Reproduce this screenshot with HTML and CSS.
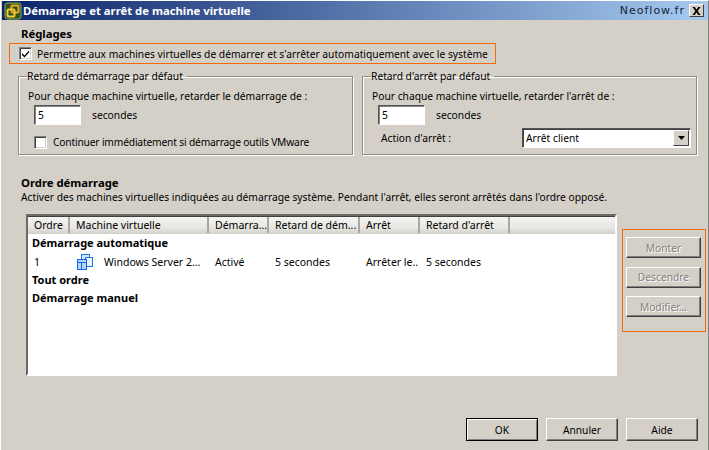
FILE: index.html
```html
<!DOCTYPE html>
<html lang="fr">
<head>
<meta charset="utf-8">
<title>Démarrage et arrêt de machine virtuelle</title>
<link rel="stylesheet" href="styles.css">
</head>
<body>
<div class="window">
  <header class="titlebar">
    <svg class="app-icon" width="18" height="18" viewBox="0 0 18 18">
      <rect x="1" y="1" width="16" height="16" rx="2.5" fill="#33531c" stroke="#8fb04a"/>
      <rect x="7.500" y="3.500" width="7" height="7" rx="1" fill="none" stroke="#e8a92c" stroke-width="2"/>
      <rect x="3.500" y="7.500" width="7" height="7" rx="1" fill="none" stroke="#f6c83c" stroke-width="2"/>
    </svg>
    <span class="title">Démarrage et arrêt de machine virtuelle</span>
    <span class="brand">Neoflow.fr</span>
    <button class="close" type="button">
      <svg width="9" height="8" viewBox="0 0 9 8"><path d="M0.500 0h2.200l1.800 2.600L6.300 0h2.200L5.700 4l2.800 4H6.300L4.500 5.400 2.700 8H0.500l2.800-4z" fill="#000"/></svg>
    </button>
  </header>

  <main class="content">
    <h2 class="heading settings-heading">Réglages</h2>
    <label class="highlight auto-start">
      <span class="check checked">
        <svg width="9" height="9" viewBox="0 0 9 9"><path d="M1 4l2.500 2.500L8 1.500v2L3.500 8.500 1 6z" fill="#000"/></svg>
      </span>
      Permettre aux machines virtuelles de démarrer et s'arrêter automatiquement avec le système
    </label>

    <div class="groups">
      <fieldset class="group">
        <legend>Retard de démarrage par défaut</legend>
        <p class="group-text">Pour chaque machine virtuelle, retarder le démarrage de :</p>
        <div class="delay"><span class="input">5</span><span>secondes</span></div>
        <label class="continue"><span class="check"></span>Continuer immédiatement si démarrage outils VMware</label>
      </fieldset>
      <fieldset class="group">
        <legend>Retard d'arrêt par défaut</legend>
        <p class="group-text">Pour chaque machine virtuelle, retarder l'arrêt de :</p>
        <div class="delay"><span class="input">5</span><span>secondes</span></div>
        <div class="action">
          <span class="action-label">Action d'arrêt :</span>
          <div class="select">
            <span class="select-value">Arrêt client</span>
            <span class="select-arrow"><svg width="7" height="4" viewBox="0 0 7 4"><path d="M0 0h7L3.500 4z" fill="#000"/></svg></span>
          </div>
        </div>
      </fieldset>
    </div>

    <h2 class="heading order-heading">Ordre démarrage</h2>
    <p class="order-text">Activer des machines virtuelles indiquées au démarrage système. Pendant l'arrêt, elles seront arrêtés dans l'ordre opposé.</p>

    <div class="order-area">
      <div class="table">
        <div class="thead">
          <span class="th">Ordre</span>
          <span class="th">Machine virtuelle</span>
          <span class="th">Démarra...</span>
          <span class="th">Retard de dém...</span>
          <span class="th">Arrêt</span>
          <span class="th">Retard d'arrêt</span>
          <span class="th th-last"></span>
        </div>
        <div class="tbody">
          <div class="group-row">Démarrage automatique</div>
          <div class="row">
            <span class="cell cell-order">1</span>
            <span class="cell cell-vm">
              <svg class="vm-icon" width="16" height="16" viewBox="0 0 16 16">
                <rect x="4.500" y="0.500" width="8" height="8" fill="#d6e8fc" stroke="#1a78ee"/>
                <rect x="8.500" y="3.500" width="7" height="9" fill="#eaf3fd" stroke="#1a78ee"/>
                <rect x="0.500" y="5.500" width="9" height="10" fill="#b4d8fb" stroke="#0f66e0"/>
                <path d="M1 8.500h8M4.500 9v6" stroke="#0f66e0"/>
              </svg>
              <span class="vm-name">Windows Server 2...</span>
            </span>
            <span class="cell">Activé</span>
            <span class="cell">5 secondes</span>
            <span class="cell">Arrêter le..</span>
            <span class="cell">5 secondes</span>
          </div>
          <div class="group-row">Tout ordre</div>
          <div class="group-row">Démarrage manuel</div>
        </div>
      </div>
      <div class="highlight side">
        <button class="btn side-btn" type="button" disabled>Monter</button>
        <button class="btn side-btn" type="button" disabled>Descendre</button>
        <button class="btn side-btn" type="button" disabled>Modifier...</button>
      </div>
    </div>

    <footer class="footer">
      <button class="btn foot-btn default" type="button">OK</button>
      <button class="btn foot-btn" type="button">Annuler</button>
      <button class="btn foot-btn" type="button">Aide</button>
    </footer>
  </main>
</div>
</body>
</html>
```
FILE: styles.css
```css
* { box-sizing: border-box; }
html, body { margin: 0; padding: 0; }
body {
  width: 709px;
  height: 450px;
  overflow: hidden;
  background: #d4d0c8;
  font-family: "Noto Sans", "Liberation Sans", sans-serif;
  font-size: 10.25px;
  line-height: 14px;
  color: #000;
}
.window {
  width: 709px;
  height: 450px;
  padding: 0 0 0 1px;
  border-top: 1px solid #fff;
  border-left: 1px solid #fff;
  border-right: 1px solid #808080;
  display: flex;
  flex-direction: column;
}
.titlebar {
  height: 19px;
  flex: none;
  display: flex;
  align-items: center;
  padding: 0 4px 0 2px;
  background: linear-gradient(90deg, #0a246a 0%, #a6caf0 100%);
}
.app-icon { flex: none; margin-right: 1px; }
.title {
  color: #fff;
  font-weight: 700;
  font-size: 11.3px;
  flex: 1;
}
.brand {
  font-family: "DejaVu Sans", sans-serif;
  font-size: 11px;
  letter-spacing: 1px;
  color: #16243c;
  margin-right: 4px;
}
.close {
  width: 15px;
  height: 13px;
  padding: 0;
  background: #d4d0c8;
  border: 1px solid;
  border-color: #fff #404040 #404040 #fff;
  display: flex;
  align-items: center;
  justify-content: center;
}
.content {
  flex: 1;
  min-height: 0;
  display: flex;
  flex-direction: column;
  padding: 0 10px 0 8px;
}
.heading {
  margin: 0;
  font-size: 11.3px;
  line-height: 14px;
  font-weight: 700;
}
.settings-heading { margin: 7px 0 0 11px; }
.highlight { border: 1px solid #f46a0a; }
.auto-start {
  width: 487px;
  height: 21px;
  margin: 2px 0 0 -1px;
  padding-left: 9px;
  display: flex;
  align-items: center;
  white-space: nowrap;
}
.check {
  width: 13px;
  height: 13px;
  flex: none;
  margin-right: 5px;
  background: #fff;
  border: 1px solid;
  border-color: #808080 #fff #fff #808080;
  box-shadow: inset 1px 1px 0 #404040, inset -1px -1px 0 #d4d0c8;
  display: flex;
  align-items: center;
  justify-content: center;
}
.groups {
  display: flex;
  gap: 9px;
  margin: 5px 0 0 8px;
}
.group {
  width: 335px;
  height: 86px;
  margin: 0;
  padding: 0 0 0 9px;
  border: 1px solid #8e8c86;
  box-shadow: 1px 1px 0 #fff, inset 1px 1px 0 #fff;
  min-width: 0;
}
.group legend {
  padding: 0 4px 0 0;
  margin-left: -1px;
  line-height: 14px;
}
.group-text { margin: 6px 0 0; }
.delay {
  display: flex;
  align-items: center;
  margin: 2px 0 0 6px;
  height: 20px;
}
.input {
  width: 47px;
  height: 20px;
  margin-right: 11px;
  padding: 2px 0 0 3px;
  background: #fff;
  border: 1px solid;
  border-color: #555 #fff #fff #555;
  box-shadow: inset 1px 1px 0 #808080;
}
.continue {
  display: flex;
  align-items: center;
  margin: 10px 0 0 6px;
  letter-spacing: -0.18px;
}
.continue .check { margin-right: 6px; }
.action {
  display: flex;
  align-items: center;
  justify-content: space-between;
  margin: 3px 5px 0 9px;
}
.select {
  width: 169px;
  height: 20px;
  background: #fff;
  border: 1px solid;
  border-color: #555 #fff #fff #555;
  box-shadow: inset 1px 1px 0 #404040;
  display: flex;
  align-items: center;
  justify-content: space-between;
  padding: 1px;
}
.select-value { padding-left: 2px; }
.select-arrow {
  width: 16px;
  height: 16px;
  background: #d4d0c8;
  border: 1px solid;
  border-color: #fff #404040 #404040 #fff;
  display: flex;
  align-items: center;
  justify-content: center;
}
.order-heading { margin: 21px 0 0 11px; }
.order-text { margin: 0 0 0 11px; }
.order-area {
  display: flex;
  margin: 10px 0 0 16px;
  height: 162px;
}
.table {
  width: 591px;
  height: 162px;
  flex: none;
  background: #fff;
  border: 2px solid;
  border-color: #6b6a66 #fff #fff #6b6a66;
  box-shadow: inset 0 1px 0 #404040;
  display: flex;
  flex-direction: column;
  font-size: 10.5px;
}
.thead, .row {
  display: grid;
  grid-template-columns: 42px 139px 60px 91px 60px 90px 1fr;
}
.thead {
  height: 17px;
  margin-top: 1px;
  background: linear-gradient(180deg, #f4f4f2 0%, #e6e5e1 70%, #d6d4ce 100%);
  border-bottom: 1px solid #d4d0c8;
}
.th {
  padding: 0 0 0 6px;
  line-height: 16px;
  border-right: 2px solid #a8a6a0;
  white-space: nowrap;
  overflow: hidden;
}
.th-last { border-right: 0; }
.group-row {
  height: 18px;
  line-height: 18px;
  padding-left: 4px;
  font-weight: 700;
  font-size: 11px;
}
.tbody .group-row:first-child { height: 19px; }
.row { height: 18px; line-height: 18px; }
.cell { padding-left: 6px; white-space: nowrap; }
.cell-vm { display: flex; align-items: center; }
.vm-icon { flex: none; margin-left: 1px; margin-right: 11px; }
.side {
  width: 84px;
  height: 103px;
  margin: 15px 0 0 5px;
  padding: 7px 4px 0 3px;
  display: flex;
  flex-direction: column;
  gap: 8.5px;
  flex: none;
}
.btn {
  font: inherit;
  padding: 0;
  background: #d4d0c8;
  color: #000;
  border: 1px solid;
  border-color: #fff #404040 #404040 #fff;
  box-shadow: inset -1px -1px 0 #808080;
}
.side-btn {
  width: 75px;
  height: 21px;
}
.side-btn:disabled { color: #84827c; text-shadow: 1px 1px 0 #fff; }
.footer {
  display: flex;
  justify-content: flex-end;
  gap: 8px;
  margin: 42px 0 0;
}
.foot-btn {
  width: 72px;
  height: 23px;
}
.default {
  border-color: #000;
  box-shadow: inset 1px 1px 0 #fff, inset -1px -1px 0 #808080;
}
```
